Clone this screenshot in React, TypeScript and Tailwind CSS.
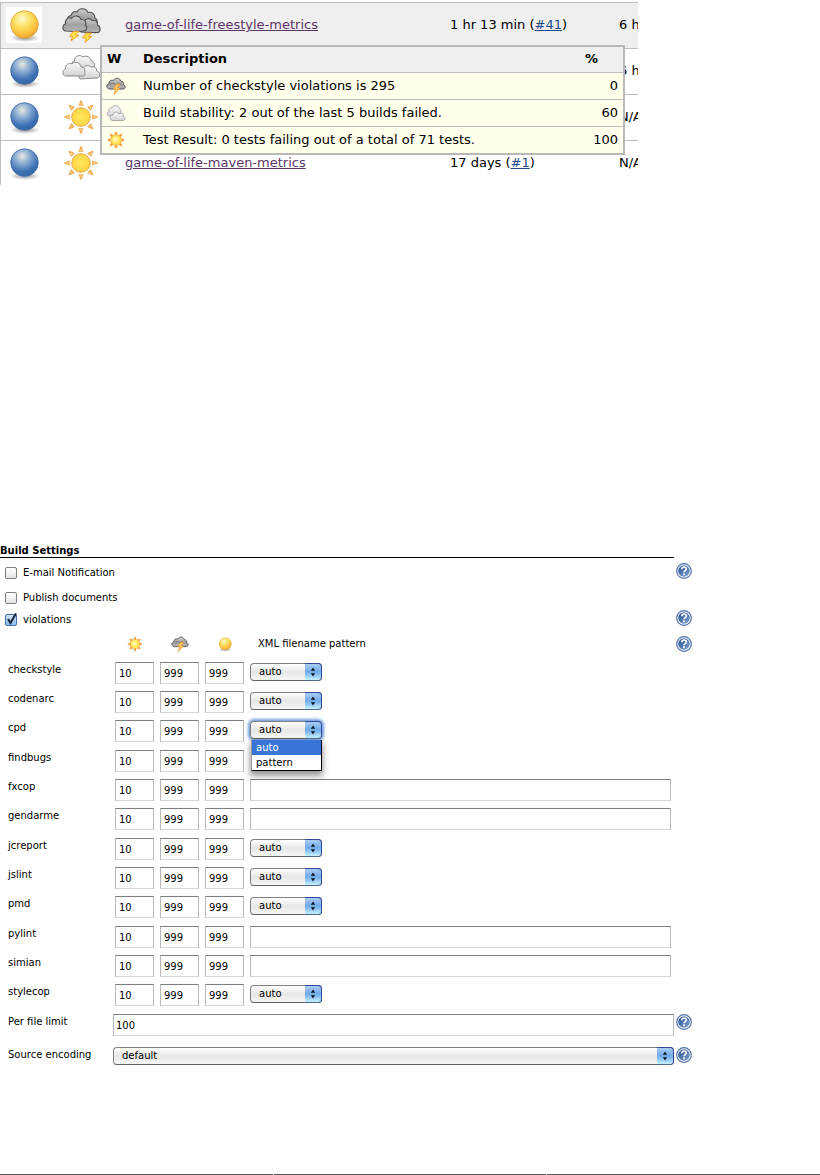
import { useState } from "react";
import type { ReactNode } from "react";

const jobs = [
  { ball: "yellow", weather: "storm", name: "game-of-life-freestyle-metrics", last: "1 hr 13 min", build: "#41", failure: "6 h" },
  { ball: "blue", weather: "cloudy", name: "", last: "", build: "", failure: "6 h" },
  { ball: "blue", weather: "sunny", name: "", last: "", build: "", failure: "N/A" },
  { ball: "blue", weather: "sunny", name: "game-of-life-maven-metrics", last: "17 days", build: "#1", failure: "N/A" },
];

const reports = [
  { icon: "storm", text: "Number of checkstyle violations is 295", score: 0 },
  { icon: "cloudy", text: "Build stability: 2 out of the last 5 builds failed.", score: 60 },
  { icon: "sunny", text: "Test Result: 0 tests failing out of a total of 71 tests.", score: 100 },
];

const violationTypes = [
  { name: "checkstyle", pattern: "select" },
  { name: "codenarc", pattern: "select" },
  { name: "cpd", pattern: "open" },
  { name: "findbugs", pattern: "none" },
  { name: "fxcop", pattern: "text" },
  { name: "gendarme", pattern: "text" },
  { name: "jcreport", pattern: "select" },
  { name: "jslint", pattern: "select" },
  { name: "pmd", pattern: "select" },
  { name: "pylint", pattern: "text" },
  { name: "simian", pattern: "text" },
  { name: "stylecop", pattern: "select" },
];

const Gradients = () => (
  <svg className="absolute h-0 w-0" aria-hidden="true">
    <defs>
      <radialGradient id="ball-yellow" cx="0.42" cy="0.3" r="0.7">
        <stop offset="0" stopColor="#fdf8cc" />
        <stop offset="0.4" stopColor="#fbe268" />
        <stop offset="0.8" stopColor="#fdbc38" />
        <stop offset="1" stopColor="#e3a43a" />
      </radialGradient>
      <radialGradient id="ball-blue" cx="0.42" cy="0.28" r="0.72">
        <stop offset="0" stopColor="#e6e8dc" />
        <stop offset="0.35" stopColor="#8fb0d4" />
        <stop offset="0.75" stopColor="#3f73b6" />
        <stop offset="1" stopColor="#3464a6" />
      </radialGradient>
      <radialGradient id="ball-shadow">
        <stop offset="0" stopColor="#777" stopOpacity="0.8" />
        <stop offset="1" stopColor="#777" stopOpacity="0" />
      </radialGradient>
      <radialGradient id="sun-core">
        <stop offset="0" stopColor="#ffe95e" />
        <stop offset="1" stopColor="#fdd244" />
      </radialGradient>
      <linearGradient id="cloud-dark" x1="0" y1="0" x2="0" y2="1">
        <stop offset="0" stopColor="#d0d0d0" />
        <stop offset="0.55" stopColor="#a2a2a2" />
        <stop offset="1" stopColor="#b2b2b2" />
      </linearGradient>
      <linearGradient id="cloud-light" x1="0" y1="0" x2="0" y2="1">
        <stop offset="0" stopColor="#fafafa" />
        <stop offset="1" stopColor="#d2d2d2" />
      </linearGradient>
      <linearGradient id="help-fill" x1="0" y1="0" x2="1" y2="1">
        <stop offset="0" stopColor="#274f8f" />
        <stop offset="1" stopColor="#7fa3d2" />
      </linearGradient>
    </defs>
  </svg>
);

const Ball = ({ color, className }: { color: string; className: string }) => (
  <svg viewBox="0 0 36 36" className={className}>
    <ellipse cx="19" cy="31" rx="15" ry="4" fill="url(#ball-shadow)" />
    <circle cx="18.500" cy="17.500" r="14" fill={color === "yellow" ? "url(#ball-yellow)" : "url(#ball-blue)"} />
    <circle cx="18.500" cy="17.500" r="13.600" fill="none" stroke={color === "yellow" ? "#dba548" : "#4a70a6"} strokeWidth="0.800" />
  </svg>
);

const rays = [0, 45, 90, 135, 180, 225, 270, 315];

const Sun = ({ className }: { className: string }) => (
  <svg viewBox="0 0 36 36" className={className}>
    {rays.map((angle) => (
      <path
        key={angle}
        d="M16.200 6.200 18 1.600 19.800 6.200Z"
        transform={`rotate(${angle} 18 18)`}
        fill="#fff3cf"
        stroke="#f0a94a"
        strokeWidth="1.200"
        strokeLinejoin="round"
      />
    ))}
    <circle cx="18" cy="18" r="9.300" fill="url(#sun-core)" stroke="#eda94c" strokeWidth="1" />
  </svg>
);

const SmallSun = ({ className }: { className: string }) => (
  <svg viewBox="0 0 18 18" className={className}>
    {rays.map((angle) => (
      <path key={angle} d="M7.500 3.600 8.300 0.800H9.700L10.500 3.600Z" transform={`rotate(${angle} 9 9)`} fill="#f0a040" />
    ))}
    <circle cx="9" cy="9" r="5.300" fill="#ffe45a" stroke="#f3b040" strokeWidth="1" />
    <circle cx="8.500" cy="8.500" r="2.500" fill="#fff6a8" />
  </svg>
);

const Storm = ({ className }: { className: string }) => (
  <svg viewBox="0 0 40 36" className={className}>
    <g fill="url(#cloud-dark)" stroke="#505050" strokeWidth="1.100">
      <path d="M8 17C5 14 6 9 10 8.500C11 5 14 4 16 5C18 0.500 25 0.500 27 5.500C31 4.500 34 7 34 11C36 12 36.500 14 36 17Z" />
      <path d="M20 25C18 22 19 17 23 15.500C24 11 29 10.500 31 13.500C35 12.500 37 15 36.500 18C40 19.500 40 25 36.500 25.500C33 26 30 25 28 25.500Z" />
      <path d="M5 24C1 23.500 1 18 4.500 17C3.500 12.500 7.500 9.500 10.500 11.500C13 7.500 19 8.500 20 12.500C23.500 12 26 15 24.500 18C27 20 25.500 24 23 24C19 24.500 16 24 13 24.500Z" />
    </g>
    <g fill="#ffe14a" stroke="#f0a02c" strokeWidth="0.900">
      <path d="M12 24.500 8.500 29.500H11.500L10 34 18 28H14.500L18 24.500Z" />
      <path d="M25 26 21.500 31H25L24 35.500 31 29.500H27.500L30.500 26Z" />
    </g>
  </svg>
);

const Clouds = ({ className }: { className: string }) => (
  <svg viewBox="0 0 40 28" className={className}>
    <g fill="url(#cloud-light)" stroke="#8a8a8a" strokeWidth="1">
      <path d="M12 17C9 15 9 9 13.500 8C13 3 19 1 22 4C25 2 30 4 30 8C33.500 8.500 34 12 33 15Z" />
      <path d="M19 26C16 23 18 18 21.500 18C21 13 27 11 30 14C34 13 36 15.500 35.500 18C40 19 39.500 25 36 25Z" />
      <path d="M4.500 23C1 22.500 1 17 4.500 16C4 11.500 8 9.500 11 11C14 7.500 20 10 20 14C23.500 14 24.500 17 23.500 19C25 21 23.500 23.500 21.500 23Z" />
    </g>
  </svg>
);

const SmallStorm = ({ className }: { className: string }) => (
  <svg viewBox="0 0 20 18" className={className}>
    <path
      d="M3.500 12C0 11.500 0 7.500 3 7C2.500 4 5.500 2.500 7.500 3.500C9 0.200 14 0.500 14.500 4C17 4 18 6 17.500 7.500C20 8.500 19.500 12 17 12Z"
      fill="url(#cloud-dark)"
      stroke="#555"
      strokeWidth="1"
    />
    <path d="M4 8C6 5.500 8.500 6 9.500 8C11 6 14 6 15 8" fill="none" stroke="#6a6a6a" strokeWidth="0.900" />
    <path d="M10.500 7 7.500 12H9.800L8 17.500 14 11H11.500L14 7Z" fill="#ffc862" stroke="#ec982f" strokeWidth="0.800" />
  </svg>
);

const SmallClouds = ({ className }: { className: string }) => (
  <svg viewBox="0 0 20 18" className={className}>
    <g fill="url(#cloud-light)" stroke="#a0a0a0" strokeWidth="0.900">
      <path d="M3 12C0 11 1 8 3 7.500C2 4 5 3 6 4C7 0.500 13 1 13 4.500C16 5 15 9 14 10Z" />
      <path d="M6 16.500C3 15.500 4 11 7 11C7 8 12 7 13 10C16 8 18 10 17 12C20 13 19 16.500 17 16.500Z" />
    </g>
  </svg>
);

const Weather = ({ kind }: { kind: string }) => {
  if (kind === "storm") return <Storm className="h-9 w-10" />;
  if (kind === "cloudy") return <Clouds className="mb-2 h-7 w-10" />;
  return <Sun className="mx-0.5 h-9 w-9" />;
};

const SmallWeather = ({ kind }: { kind: string }) => {
  if (kind === "storm") return <SmallStorm className="h-[18px] w-5" />;
  if (kind === "cloudy") return <SmallClouds className="h-[18px] w-5" />;
  return <SmallSun className="h-[18px] w-5" />;
};

const HelpButton = () => (
  <button type="button" aria-label="Help" className="block h-4 w-4">
    <svg viewBox="0 0 16 16" className="h-4 w-4">
      <circle cx="8" cy="8" r="7.300" fill="#fff" stroke="#4a71ab" strokeWidth="1.200" />
      <circle cx="8" cy="8" r="5.800" fill="url(#help-fill)" />
      <path d="M5.800 6.200C5.800 3.300 10.300 3.300 10.300 6C10.300 7.600 8 7.600 8 9.300" fill="none" stroke="#fff" strokeWidth="1.700" />
      <rect x="7.100" y="10.400" width="1.800" height="1.800" fill="#fff" />
    </svg>
  </button>
);

const JobList = () => (
  <section className="relative w-full max-w-[638px] pt-0.5">
    <div className="overflow-hidden border-t border-l border-[#bdbdbd]">
      <table className="w-full table-fixed text-[13px] leading-4">
        <colgroup>
          <col className="w-12" />
          <col className="w-[76px]" />
          <col />
          <col className="w-[169px]" />
          <col className="w-[19px]" />
        </colgroup>
        <tbody>
          {jobs.map((job, i) => (
            <tr key={i} className="h-[46px] border-b border-[#bdbdbd] first:h-[45px] first:bg-[#efefef] last:h-[45px] last:border-b-0">
              <td>
                <div className={i === 0 ? "ml-[5px] w-9 bg-white" : "ml-[5px] w-9"}>
                  <Ball color={job.ball} className="h-9 w-9" />
                </div>
              </td>
              <td className="pl-3">
                <Weather kind={job.weather} />
              </td>
              <td className="whitespace-nowrap">
                {job.name && <a href="#" className="text-[#5c3566] underline">{job.name}</a>}
              </td>
              <td className="whitespace-nowrap">
                {job.last && (
                  <>
                    {job.last} (<a href="#" className="text-[#204a87] underline">{job.build}</a>)
                  </>
                )}
              </td>
              <td className="overflow-hidden whitespace-nowrap">{job.failure}</td>
            </tr>
          ))}
        </tbody>
      </table>
    </div>
    <HealthTooltip />
  </section>
);

const HealthTooltip = () => (
  <div className="absolute top-[45px] right-[13px] left-[100px] border-2 border-[#b8b8b8] bg-[#ffffec]">
    <table className="w-full table-fixed text-[13px] leading-4">
      <colgroup>
        <col className="w-[41px]" />
        <col />
        <col className="w-[38px]" />
      </colgroup>
      <thead>
        <tr className="h-[25px] bg-[#efefef] text-left">
          <th className="pl-[5px]">W</th>
          <th>Description</th>
          <th>%</th>
        </tr>
      </thead>
      <tbody>
        {reports.map((report) => (
          <tr key={report.text} className="h-[27px] border-t border-[#bdbdbd]">
            <td className="pl-1">
              <SmallWeather kind={report.icon} />
            </td>
            <td className="whitespace-nowrap">{report.text}</td>
            <td className="pr-[5px] text-right">{report.score}</td>
          </tr>
        ))}
      </tbody>
    </table>
  </div>
);

const CheckRow = ({ label, checked = false, help = false, className }: {
  label: string;
  checked?: boolean;
  help?: boolean;
  className: string;
}) => {
  const [on, setOn] = useState(checked);
  return (
    <div className={`flex items-center justify-between ${className}`}>
      <label className="flex items-center gap-1.5 pl-[5px]">
        <span className="relative h-3 w-3">
          <input
            type="checkbox"
            checked={on}
            onChange={() => setOn(!on)}
            className="block h-3 w-3 appearance-none rounded-[2px] border border-[#808080] bg-linear-to-b from-[#fff] to-[#e4e4e4] checked:border-[#4a6ea8] checked:from-[#cfe2f8] checked:to-[#8dbcf0]"
          />
          {on && (
            <svg viewBox="0 0 12 14" className="pointer-events-none absolute -top-0.5 left-0 h-3.5 w-3">
              <path d="M3 7 5.500 11 11 1.500" fill="none" stroke="#142338" strokeWidth="2" />
            </svg>
          )}
        </span>
        {label}
      </label>
      {help && <div className="mb-1"><HelpButton /></div>}
    </div>
  );
};

const Select = ({ label, id, options, className, open = false }: {
  label: string;
  id?: string;
  options: string[];
  className: string;
  open?: boolean;
}) => (
  <div className={`relative ${className}`}>
    <select
      id={id}
      aria-label={label}
      className={`block h-[18px] w-full appearance-none rounded-[4px] border border-[#7f7f7f] border-b-[#606060] bg-linear-to-b from-[#fff] via-[#e6e6e6] to-[#f6f6f6] pl-2 leading-4 outline-none ${open ? "shadow-[0_0_3px_2px_#6f9fdc]" : ""}`}
    >
      {options.map((option) => (
        <option key={option}>{option}</option>
      ))}
    </select>
    <span className="pointer-events-none absolute top-0 right-0 flex h-[18px] w-[17px] items-center justify-center rounded-r-[4px] border border-l-0 border-[#35499c] border-b-[#4d6a8c] bg-linear-to-b from-[#a9cdf3] via-[#72a9e8] to-[#c4f2ff]">
      <svg viewBox="0 0 6 10" className="h-2.5 w-1.5" fill="#0b1526">
        <path d="M3 0.500 5.200 3.800H0.800Z" />
        <path d="M3 9.500 5.200 6.200H0.800Z" />
      </svg>
    </span>
    {open && (
      <ul role="listbox" aria-label={`${label} options`} className="absolute top-[19px] left-px right-0 z-10 border border-t-0 border-black border-l-[#999] bg-white leading-[15px] shadow-[0_4px_6px_1px_#00000066]">
        {options.map((option, i) => (
          <li key={option} role="option" aria-selected={i === 0} className={i === 0 ? "bg-[#3875d7] pl-1 text-white" : "pl-1"}>
            {option}
          </li>
        ))}
      </ul>
    )}
  </div>
);

const Field = ({ label, id, value = "", className }: {
  label: string;
  id?: string;
  value?: string;
  className: string;
}) => (
  <input
    type="text"
    id={id}
    aria-label={label}
    defaultValue={value}
    className={`block h-[22px] border border-[#b8b8b8] border-t-[#7d7d7d] border-b-[#d5d5d5] bg-white outline-none ${className}`}
  />
);

const HeaderIcon = ({ children }: { children: ReactNode }) => (
  <span className="flex w-[39px] justify-center">{children}</span>
);

const ViolationRow = ({ name, pattern }: { name: string; pattern: string }) => (
  <div role="group" aria-label={name} className="flex h-[29px] pr-[21px] pl-2 nth-[3n]:h-[30px]">
    <span className="w-[107px] leading-4">{name}</span>
    <div className="flex min-w-0 flex-1 gap-1.5">
      <Field label={`${name} sunny`} value="10" className="w-[39px] pl-[3px]" />
      <Field label={`${name} stormy`} value="999" className="w-[39px] pl-[3px]" />
      <Field label={`${name} unstable`} value="999" className="w-[39px] pl-[3px]" />
      {(pattern === "select" || pattern === "open") && (
        <Select
          label={`${name} pattern`}
          options={["auto", "pattern"]}
          open={pattern === "open"}
          className="mt-px h-[18px] w-[72px]"
        />
      )}
      {pattern === "text" && <Field label={`${name} pattern`} className="min-w-0 flex-1 px-1" />}
    </div>
  </div>
);

const BuildSettings = () => (
  <form className="mt-[359px] w-full max-w-[692px] text-[10px] leading-4 text-black">
    <h2 className="mr-[18px] border-b border-black leading-[13px] font-bold">Build Settings</h2>
    <CheckRow label="E-mail Notification" help className="h-[30px]" />
    <CheckRow label="Publish documents" className="h-5" />
    <CheckRow label="violations" checked help className="h-6" />
    <div className="flex h-[30px] items-start pt-1 pl-[115px]">
      <div className="flex items-center gap-1.5">
        <HeaderIcon><SmallSun className="h-4 w-4" /></HeaderIcon>
        <HeaderIcon><SmallStorm className="h-4 w-[18px]" /></HeaderIcon>
        <HeaderIcon><Ball color="yellow" className="h-4 w-4" /></HeaderIcon>
        <span className="pl-2">XML filename pattern</span>
      </div>
      <div className="ml-auto"><HelpButton /></div>
    </div>
    <div>
      {violationTypes.map((type) => (
        <ViolationRow key={type.name} name={type.name} pattern={type.pattern} />
      ))}
    </div>
    <div className="flex h-[33px] pl-2">
      <label htmlFor="limit" className="w-[105px] leading-4">Per file limit</label>
      <Field label="Per file limit" id="limit" value="100" className="min-w-0 flex-1 pl-0.5" />
      <div className="ml-0.5"><HelpButton /></div>
    </div>
    <div className="flex pl-2">
      <label htmlFor="encoding" className="w-[105px] leading-4">Source encoding</label>
      <Select label="Source encoding" id="encoding" options={["default", "UTF-8", "ISO-8859-1"]} className="min-w-0 flex-1" />
      <div className="ml-0.5"><HelpButton /></div>
    </div>
  </form>
);

const App = () => {
  return (
    <main className="bg-white font-['DejaVu_Sans',sans-serif] text-black">
      <Gradients />
      <JobList />
      <BuildSettings />
      <div className="mt-[109px] grid grid-cols-3 gap-px">
        <div className="h-px bg-[#555]" />
        <div className="h-px bg-[#555]" />
        <div className="h-px bg-[#555]" />
      </div>
    </main>
  );
};

export default App;
